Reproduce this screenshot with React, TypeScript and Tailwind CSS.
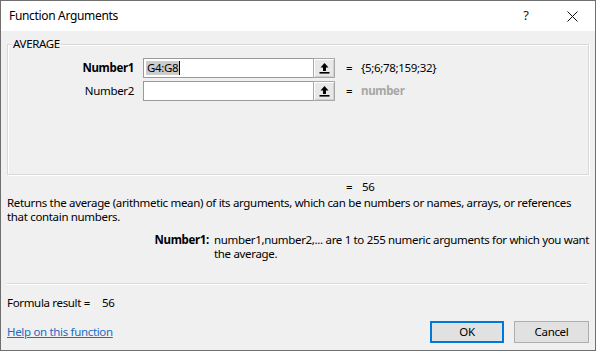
import React from "react";

function UpArrow() {
  return (
    <svg width="11" height="12" viewBox="0 0 11 12">
      <path d="M5.5 1 L1.5 5.5 H4 V9 H7 V5.5 H9.5 Z" fill="#000" />
      <rect x="0.5" y="10" width="10" height="1.6" fill="#000" />
    </svg>
  );
}

function RefButton() {
  return (
    <div className="w-[22px] h-[20px] border border-[#a8a8a8] bg-[#e8e8e8] flex items-center justify-center shadow-[inset_1px_1px_0_#ffffff,inset_-1px_-1px_0_#cfcfcf]">
      <UpArrow />
    </div>
  );
}

export default function App() {
  return (
    <div
      className="w-[596px] h-[351px] border border-[#6f6f6f] bg-[#f0f0f0] flex flex-col text-[11.5px] tracking-[-0.33px] text-black overflow-hidden"
      style={{ fontFamily: '"Noto Sans", "Open Sans", sans-serif' }}
    >
      {/* Title bar */}
      <div className="h-[30px] bg-white flex items-center shrink-0">
        <div className="pl-[8px] flex-1 text-[12px]">Function Arguments</div>
        <div className="w-[46px] h-full flex items-center justify-center text-[13px] text-[#222]">?</div>
        <div className="w-[46px] h-full flex items-center justify-center">
          <svg width="11" height="11" viewBox="0 0 11 11">
            <path d="M0.5 0.5 L10.5 10.5 M10.5 0.5 L0.5 10.5" stroke="#111" strokeWidth="1" />
          </svg>
        </div>
      </div>

      {/* Body */}
      <div className="flex-1 flex flex-col px-[6px]">
        {/* Group box */}
        <div className="mt-[13px] h-[131px] border border-[#d9d9d9] shadow-[inset_1px_1px_0_#ffffff,1px_1px_0_#ffffff] flex flex-col shrink-0">
          <div className="-mt-[8px] ml-[4px] px-[1px] w-fit bg-[#f0f0f0] leading-[14px]">AVERAGE</div>

          <div className="mt-[7px] flex items-center h-[20px]">
            <div className="w-[126px] text-right font-bold leading-[14px]">Number1</div>
            <div className="ml-[9px] w-[171px] h-[20px] border border-[#9a9a9a] bg-white flex items-center pl-[2px]">
              <span className="bg-[#cccccc] leading-[14px] px-[1px]">G4:G8</span>
              <span className="w-[1px] h-[14px] bg-black" />
            </div>
            <div className="-ml-[1px]">
              <RefButton />
            </div>
            <div className="ml-[11px] w-[15px] leading-[14px]">=</div>
            <div className="leading-[14px]">{"{5;6;78;159;32}"}</div>
          </div>

          <div className="mt-[3px] flex items-center h-[20px]">
            <div className="w-[126px] text-right leading-[14px]">Number2</div>
            <div className="ml-[9px] w-[171px] h-[20px] border border-[#9a9a9a] bg-white" />
            <div className="-ml-[1px]">
              <RefButton />
            </div>
            <div className="ml-[11px] w-[15px] leading-[14px]">=</div>
            <div className="leading-[14px] font-bold text-[#a6a6a6]">number</div>
          </div>
        </div>

        {/* = 56 */}
        <div className="mt-[5px] flex leading-[14px]">
          <div className="ml-[339px] w-[16px]">=</div>
          <div>56</div>
        </div>

        {/* Description */}
        <div className="mt-[2px] leading-[14px]">
          <div className="whitespace-nowrap">Returns the average (arithmetic mean) of its arguments, which can be numbers or names, arrays, or references</div>
          <div>that contain numbers.</div>
        </div>

        {/* Argument help */}
        <div className="mt-[9px] flex leading-[14px]">
          <div className="w-[202px] shrink-0 text-right font-bold">Number1:</div>
          <div className="ml-[5px]">
            <div className="whitespace-nowrap">number1,number2,... are 1 to 255 numeric arguments for which you want</div>
            <div>the average.</div>
          </div>
        </div>

        {/* Separator */}
        <div className="mt-[22px] h-[1px] mr-[2px] bg-[#d9d9d9] shadow-[0_1px_0_#ffffff] shrink-0" />

        {/* Formula result */}
        <div className="mt-[12px] flex leading-[14px]">
          <div className="w-[95px] shrink-0 whitespace-nowrap">Formula result =</div>
          <div>56</div>
        </div>

        {/* Bottom row */}
        <div className="mt-[11px] flex items-center">
          <a className="flex-1 text-[#1f6bbf] underline leading-[14px]">Help on this function</a>
          <button className="w-[74px] h-[22px] border-2 border-[#0078d7] bg-[#e1e1e1] leading-[14px]">OK</button>
          <button className="ml-[10px] w-[75px] h-[22px] border border-[#adadad] bg-[#e1e1e1] leading-[14px]">Cancel</button>
        </div>
      </div>
    </div>
  );
}
